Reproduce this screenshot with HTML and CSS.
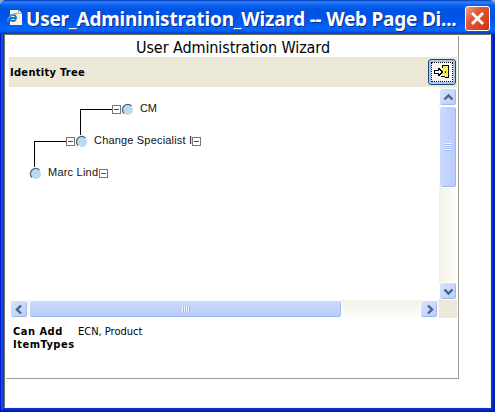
FILE: index.html
```html
<!DOCTYPE html>
<html lang="en">
<head>
<meta charset="utf-8">
<title>User Administration Wizard</title>
<link rel="stylesheet" href="styles.css">
</head>
<body>
<div class="window">
  <header class="titlebar">
    <svg class="page-icon" width="16" height="17" viewBox="0 0 16 17">
      <path d="M3 1H11.500L15 4.500V16H3Z" fill="#f8f3e2"/>
      <path d="M11.500 1V4.500H15" fill="#fff" stroke="#b8b199"/>
      <path d="M3 9H9C9 4.800 3 5 3 9S7.500 12.500 9 10.500" fill="none" stroke="#1771c8" stroke-width="1.800"/>
      <path d="M.8 12.500C0 9 6 4 10.500 4.500" fill="none" stroke="#4ba8f0" stroke-width="1.200"/>
    </svg>
    <h1><span>User_Admininistration_Wizard -- Web Page Di...</span></h1>
    <button class="close" aria-label="Close"><svg width="23" height="23" viewBox="0 0 23 23"><path d="M6 6L17 17M17 6L6 17" stroke="#fff" stroke-width="2.800"/></svg></button>
  </header>
  <main class="client">
    <section class="panel">
      <h2><span>User Administration Wizard</span></h2>
      <div class="toolbar">
        <b>Identity Tree</b>
        <button class="exit" aria-label="Exit">
          <svg width="18" height="16" viewBox="0 0 18 16" shape-rendering="crispEdges">
            <path d="M9 1h7v13h-4v-1H8v-1h1z" fill="#000"/>
            <path d="M10 2h5v11h-3v-1h-2zM9 4h2v8H9z" fill="#f6f06c"/>
            <path d="M1.500 6.500h4v-2h1v1h1v1h1v1h1v1h-1v1h-1v1h-1v1h-1v-2h-4z" fill="#fff" stroke="#000"/>
            <path d="M12 7h1v2h-1z" fill="#222"/>
          </svg>
        </button>
      </div>
      <div class="scroller">
        <svg class="tree" width="429" height="213" viewBox="10 87 429 213">
          <g class="links"><path d="M112 109.500H80.500V135M66 141.500H34.500V167"/></g>
          <g class="boxes">
            <path d="M112.500 105.500h8v8h-8zM66.500 137.500h8v8h-8zM192.500 137.500h8v8h-8zM99.500 169.500h8v8h-8z"/>
            <path class="minus" d="M114 109.500h5M68 141.500h5M194 141.500h5M101 173.500h5"/>
          </g>
          <g class="dots">
            <circle cx="128" cy="110" r="5"/><circle cx="82" cy="142" r="5"/><circle cx="36" cy="174" r="5"/>
          </g>
          <g class="arcs">
            <path d="M124 113.500A5 5 0 0 1 131.500 106M78 145.500A5 5 0 0 1 85.500 138M32 177.500A5 5 0 0 1 39.500 170"/>
          </g>
          <g class="labels">
            <text x="140" y="112" textLength="17">CM</text>
            <text x="94" y="144" textLength="98">Change Specialist I</text>
            <text x="48" y="176" textLength="50">Marc Lind</text>
          </g>
        </svg>
        <div class="vbar">
          <div class="btn"><svg width="17" height="17"><path d="M4.500 10.500L8.500 6.500L12.500 10.500"/></svg></div>
          <div class="thumb"><i></i></div>
          <div class="btn end"><svg width="17" height="17"><path d="M4.500 6.500L8.500 10.500L12.500 6.500"/></svg></div>
        </div>
        <div class="hbar">
          <div class="btn"><svg width="17" height="17"><path d="M10 4.500L6 8.500L10 12.500"/></svg></div>
          <div class="thumb"><i></i></div>
          <div class="btn end"><svg width="17" height="17"><path d="M7 4.500L11 8.500L7 12.500"/></svg></div>
        </div>
        <div class="corner"></div>
      </div>
      <div class="details">
        <b>Can Add<br>ItemTypes</b>
        <span>ECN, Product</span>
      </div>
    </section>
  </main>
</div>
</body>
</html>
```
FILE: styles.css
```css
* { box-sizing: border-box; }
body {
  margin: 0;
  width: 495px;
  height: 412px;
  overflow: hidden;
  background: #8da9d8;
  font-family: "DejaVu Sans Condensed", "DejaVu Sans", sans-serif;
  font-stretch: condensed;
  color: #000;
}
svg { display: block; }
button { padding: 0; margin: 0; }
.window {
  width: 495px;
  height: 412px;
  padding: 0 4px 4px;
  border-radius: 7px 7px 0 0;
  background: #0831d9;
  box-shadow: inset 1px 0 #0019cf, inset -2px -2px #001dae, inset 3px 0 #0b4fe6;
}
.titlebar {
  display: flex;
  height: 34px;
  margin: 0 -4px;
  padding: 6px 5px 0 7px;
  border-radius: 7px 7px 0 0;
  background: linear-gradient(#0831b8 0, #2e86fb 2px, #0a62f0 5px, #0053e1 10px, #0055e8 20px, #0665fb 28px, #0560f5 31px, #0039c0 34px);
}
.page-icon { margin-top: 3px; }
h1 {
  margin: 0 0 0 3px;
  width: 439px;
  height: 27px;
  font: bold 19px/26px "Noto Sans", "Open Sans", sans-serif;
  color: #fff;
  text-shadow: 1px 1px #0a2a88;
  white-space: nowrap;
}
h1 span { letter-spacing: -.22px; }
.close {
  flex: none;
  width: 25px;
  height: 25px;
  border: 1px solid #fff;
  border-radius: 3px;
  background: linear-gradient(135deg, #f0a28b, #e25a39 35%, #d8421d 75%, #b93513);
}
.client {
  height: 374px;
  padding: 1px 0 0 1px;
  border: 1px solid #aca899;
  border-color: #777264 #f5f5ea #f5f5ea #777264;
  background: #fff;
}
.panel {
  width: 453px;
  height: 343px;
  padding-left: 3px;
  border-right: 1px solid #9d9d95;
  border-bottom: 1px solid #9d9d95;
}
h2 {
  margin: 0;
  height: 21px;
  padding-left: 127px;
  font-size: 16px;
  line-height: 23px;
  font-weight: normal;
  white-space: nowrap;
}
h2 span { letter-spacing: -.09px; }
.toolbar {
  display: flex;
  justify-content: space-between;
  align-items: center;
  width: 448px;
  height: 30px;
  padding: 0 1px;
  background: #ebe8d7;
  font-size: 11px;
}
.toolbar b { letter-spacing: .3px; }
.exit {
  display: grid;
  place-items: center;
  width: 28px;
  height: 26px;
  border: 1px solid #1b4779;
  border-radius: 3px;
  background: #f8f7f1;
  box-shadow: inset 0 0 0 2px #a9c6ed;
  position: relative;
}
.exit::after {
  content: "";
  position: absolute;
  inset: 2px;
  border: 1px dotted #000;
}
.scroller {
  display: grid;
  grid-template: 213px 18px / 429px 18px;
  margin-left: 1px;
}
.links path { fill: none; stroke: #000; shape-rendering: crispEdges; }
.boxes path { fill: #fff; stroke: #777; shape-rendering: crispEdges; }
.boxes .minus { stroke: #555; }
.dots circle { fill: #b9daf0; }
.arcs path { fill: none; stroke: #53616c; stroke-width: 1.3; }
.labels { font: 11px "Liberation Sans", sans-serif; fill: #111; }
.vbar, .hbar { display: flex; background: linear-gradient(90deg, #f1f0e9, #fefefb); }
.vbar { flex-direction: column; padding-top: 1px; }
.hbar { background: linear-gradient(#f1f0e9, #fefefb); }
.btn, .thumb {
  flex: none;
  width: 18px;
  height: 18px;
  border: 1px solid #fff;
  border-radius: 3px;
  background: linear-gradient(135deg, #d8e4ff, #b8ccfb);
  box-shadow: inset -1px -1px #9fb8ec;
}
.btn path { fill: none; stroke: #4d6185; stroke-width: 2.4; }
.btn svg { width: 16px; height: 16px; }
.end { margin-top: auto; }
.hbar .end { margin: 0 1px 0 auto; }
.thumb { display: grid; place-items: center; }
.vbar .thumb { height: 82px; background: linear-gradient(90deg, #cbdaff, #b9cafb); }
.hbar .thumb { width: 313px; margin-left: 1px; background: linear-gradient(#cbdaff, #b9cafb); }
.thumb i { width: 8px; height: 6px; background: repeating-linear-gradient(90deg, #eef4fe 0 1px, #9dbaf8 1px 2px); }
.vbar .thumb i { width: 7px; height: 8px; background: repeating-linear-gradient(#eef4fe 0 1px, #9dbaf8 1px 2px); }
.corner { background: #ebe8d7; }
.details {
  display: flex;
  padding: 7px 0 0 4px;
  font-size: 11px;
  line-height: 13px;
}
.details b { width: 65px; letter-spacing: .5px; }
```
